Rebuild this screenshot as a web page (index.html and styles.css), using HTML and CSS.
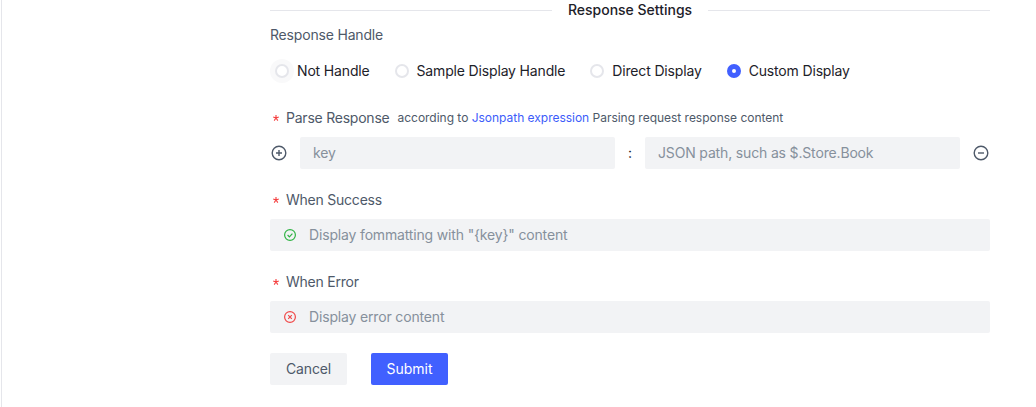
FILE: index.html
```html
<!DOCTYPE html>
<html lang="en">
<head>
<meta charset="utf-8">
<title>Response Settings</title>
<link rel="stylesheet" href="styles.css">
</head>
<body>
<main class="panel">
  <form class="form">
    <div class="divider"><span class="divider-text">Response Settings</span></div>
    <div class="label handle-label"><span>Response Handle</span></div>
    <div class="radios">
      <label class="radio"><span class="dot dot-hover"></span><span>Not Handle</span></label>
      <label class="radio"><span class="dot"></span><span>Sample Display Handle</span></label>
      <label class="radio"><span class="dot"></span><span>Direct Display</span></label>
      <label class="radio"><span class="dot dot-checked"></span><span>Custom Display</span></label>
    </div>
    <div class="label parse-label"><svg class="star" viewBox="0 0 6 6"><path d="M3 3V0M3 3L.2 2.1M3 3l2.8-.9M3 3L1.2 5.6M3 3l1.8 2.6"/></svg><span>Parse Response</span><span class="hint">according to <a class="link">Jsonpath expression</a> Parsing request response content</span></div>
    <div class="pair">
      <svg class="round-icon" viewBox="0 0 18 18"><circle cx="9" cy="9" r="6.8"/><path d="M9 6v6M6 9h6"/></svg>
      <div class="input">key</div>
      <span class="colon">:</span>
      <div class="input">JSON path, such as $.Store.Book</div>
      <svg class="round-icon" viewBox="0 0 18 18"><circle cx="9" cy="9" r="6.8"/><path d="M6 9h6"/></svg>
    </div>
    <div class="label"><svg class="star" viewBox="0 0 6 6"><path d="M3 3V0M3 3L.2 2.1M3 3l2.8-.9M3 3L1.2 5.6M3 3l1.8 2.6"/></svg><span>When Success</span></div>
    <div class="input wide"><svg class="state ok" viewBox="0 0 14 14"><circle cx="7" cy="7" r="5.4"/><path d="M4.6 7l1.8 1.8 3-3.2"/></svg><span>Display fommatting with "{key}" content</span></div>
    <div class="label"><svg class="star" viewBox="0 0 6 6"><path d="M3 3V0M3 3L.2 2.1M3 3l2.8-.9M3 3L1.2 5.6M3 3l1.8 2.6"/></svg><span>When Error</span></div>
    <div class="input wide"><svg class="state bad" viewBox="0 0 14 14"><circle cx="7" cy="7" r="5.4"/><path d="M5.2 5.2l3.6 3.6M8.8 5.2L5.2 8.8"/></svg><span>Display error content</span></div>
    <div class="actions">
      <button type="button" class="btn">Cancel</button>
      <button type="button" class="btn primary">Submit</button>
    </div>
  </form>
</main>
</body>
</html>
```
FILE: styles.css
```css
* { box-sizing: border-box; }
body {
  margin: 0;
  background: #fff;
  color: #1d2129;
  font: 14px/22px Inter, "Liberation Sans", sans-serif;
  letter-spacing: -0.16px;
}
.panel {
  height: 407px;
  margin-left: 1px;
  padding-left: 268px;
  border-left: 1px solid #e5e6eb;
  overflow: hidden;
}
.form { width: 720px; }
.divider {
  display: flex;
  align-items: center;
  height: 22px;
  margin-top: -1px;
}
.divider::before, .divider::after {
  content: "";
  flex: 1;
  height: 1px;
  background: #e5e6eb;
}
.divider-text {
  margin: 0 16px;
  font-weight: 500;
  letter-spacing: 0;
}
.label {
  display: flex;
  align-items: center;
  height: 22px;
  margin: 20px 0 8px;
  color: #4e5969;
  letter-spacing: -0.23px;
}
.handle-label {
  margin: 3px 0 9px;
  letter-spacing: -0.18px;
}
.parse-label { margin: 20px 0 8px; }
.star {
  width: 6px;
  height: 6px;
  margin: 0 7px 1px 3px;
  overflow: visible;
  fill: none;
  stroke: #f53f3f;
  stroke-width: 1.1;
}
.hint {
  margin-left: 8px;
  font-size: 12px;
  letter-spacing: -0.02px;
}
.link { color: #3c5cfa; }
.radios {
  display: flex;
  height: 32px;
  padding-left: 5px;
}
.radio {
  display: flex;
  align-items: center;
  gap: 8px;
  margin-right: 25px;
}
.dot {
  width: 14px;
  height: 14px;
  border: 2px solid #e5e6eb;
  border-radius: 50%;
  background: #fff;
}
.dot-hover { box-shadow: 0 0 0 5px #f9f9fa; }
.dot-checked { border: 5px solid #4160ff; }
.pair {
  display: flex;
  align-items: center;
}
.round-icon {
  width: 18px;
  height: 18px;
  fill: none;
  stroke: #4e5969;
  stroke-width: 1.4;
}
.input {
  display: flex;
  align-items: center;
  width: 315px;
  height: 32px;
  padding-left: 13px;
  border-radius: 2px;
  background: #f2f3f5;
  color: #86909c;
}
.round-icon + .input { margin-left: 12px; }
.input + .round-icon { margin-left: 12px; }
.colon {
  width: 30px;
  text-align: center;
}
.wide { width: 720px; }
.state {
  width: 14px;
  height: 14px;
  margin-right: 12px;
  fill: none;
  stroke-width: 1.2;
}
.ok { stroke: #2fb344; }
.bad { stroke: #f04848; }
.actions {
  display: flex;
  gap: 24px;
  margin-top: 20px;
}
.btn {
  width: 77px;
  height: 32px;
  padding: 0;
  border: 0;
  border-radius: 2px;
  background: #f2f3f5;
  color: #4e5969;
  font: inherit;
  letter-spacing: -0.18px;
}
.primary {
  background: #4160ff;
  color: #fff;
  letter-spacing: 0;
}
```
